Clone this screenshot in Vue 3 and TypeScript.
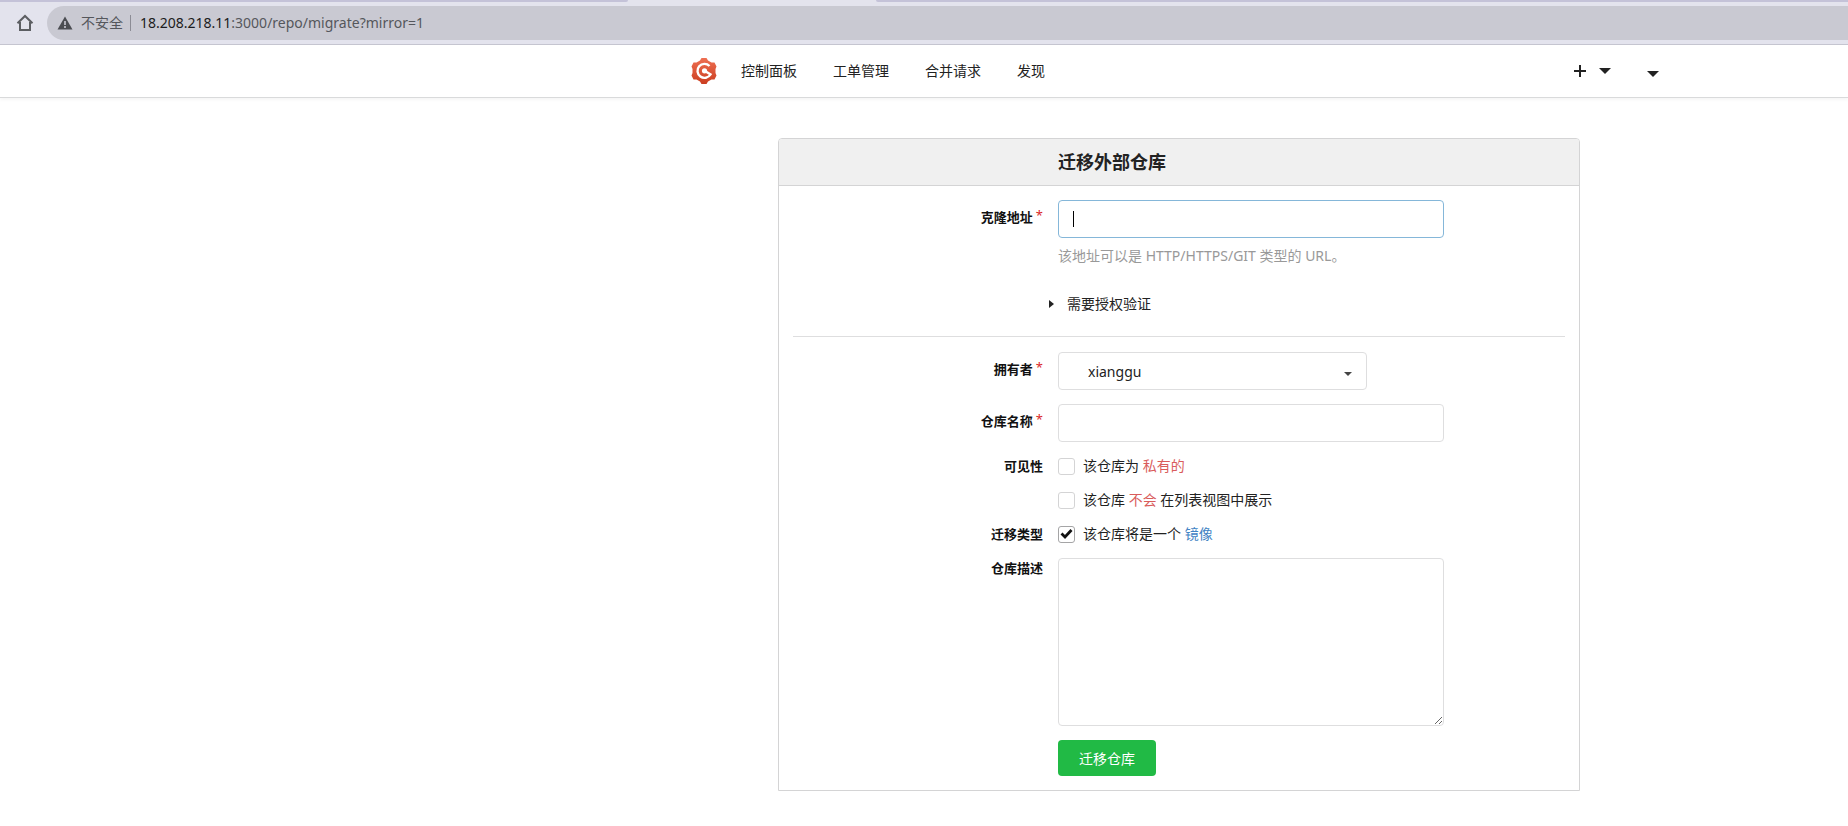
<script setup lang="ts">
import { onMounted, ref } from 'vue'

const navLinks = ['控制面板', '工单管理', '合并请求', '发现']
const cloneInput = ref<HTMLInputElement | null>(null)
const cloneAddr = ref('')
const owner = ref('xianggu')
const repoName = ref('')
const isPrivate = ref(false)
const isUnlisted = ref(false)
const isMirror = ref(true)
const description = ref('')

onMounted(() => cloneInput.value?.focus())
</script>

<template>
  <div class="page">
    <header class="browser">
      <div class="tabs"><span class="tab-left"></span><span class="tab-right"></span></div>
      <div class="toolbar">
        <button class="home" type="button" aria-label="主页">
          <svg width="18" height="18" viewBox="0 0 18 18" fill="none" stroke="#5c5e62" stroke-width="2">
            <path d="M1.500 9.200 9 2l7.500 7.200M4 8v8h10V8" />
          </svg>
        </button>
        <div class="omnibox">
          <svg class="warn" width="16" height="14" viewBox="0 0 16 14">
            <path d="M8 0.500 15.500 13.500H0.500Z" fill="#4b4d52" />
            <path d="M8 5v4M8 10v2" stroke="#c9c9d2" stroke-width="1.600" />
          </svg>
          <span class="unsafe">不安全</span>
          <span class="bar"></span>
          <span class="url"><b>18.208.218.11</b>:3000/repo/migrate?mirror=1</span>
        </div>
      </div>
    </header>

    <nav class="nav">
      <div class="nav-inner">
        <a class="logo" href="#" aria-label="首页">
          <svg width="26" height="26" viewBox="0 0 26 26">
            <defs>
              <linearGradient id="gear" x1="0" y1="0" x2="0" y2="1">
                <stop offset="0" stop-color="#ee6f52" />
                <stop offset="1" stop-color="#cb3e20" />
              </linearGradient>
            </defs>
            <path d="M10.500 0h5L17 2.500 20.500 4.500 23.500 4.500 25.500 8.500 24.500 11v4L25.500 17.500 23.500 21.500 20.500 21.500 17 23.500 15.500 26h-5L9 23.500 5.500 21.500 2.500 21.500 0.500 17.500 1.500 15v-4L0.500 8.500 2.500 4.500 5.500 4.500 9 2.500Z" fill="url(#gear)" />
            <path d="M18.500 8A7 7 0 1 0 19.500 16.500L14 13" fill="none" stroke="#fff" stroke-width="2.400" />
            <circle cx="13.500" cy="12.800" r="2.600" fill="#fff" />
          </svg>
        </a>
        <a v-for="link in navLinks" :key="link" href="#">{{ link }}</a>
        <div class="actions">
          <button class="create" type="button" aria-label="创建">
            <svg width="12" height="12" viewBox="0 0 12 12"><path d="M6 0v12M0 6h12" stroke="#222" stroke-width="2" /></svg>
            <svg width="12" height="6" viewBox="0 0 12 6"><path d="M0 0h12L6 6Z" fill="#222" /></svg>
          </button>
          <button class="user" type="button" aria-label="用户菜单">
            <svg width="12" height="6" viewBox="0 0 12 6"><path d="M0 0h12L6 6Z" fill="#222" /></svg>
          </button>
        </div>
      </div>
    </nav>

    <main class="content">
      <form class="panel" @submit.prevent>
        <h1>迁移外部仓库</h1>
        <div class="fields">
          <div class="row">
            <label class="name" for="clone">克隆地址<sup>*</sup></label>
            <div class="control">
              <input id="clone" ref="cloneInput" v-model="cloneAddr" class="box focused" :class="{ empty: !cloneAddr }" type="text" />
              <span v-if="!cloneAddr" class="caret"></span>
              <p class="help">该地址可以是 HTTP/HTTPS/GIT 类型的 URL。</p>
            </div>
          </div>
          <div class="row auth-row">
            <button class="auth" type="button">
              <svg width="5" height="8" viewBox="0 0 5 8"><path d="M0 0v8l5-4Z" fill="#222" /></svg>
              需要授权验证
            </button>
          </div>
          <hr />
          <div class="row">
            <label class="name" for="owner">拥有者<sup>*</sup></label>
            <div class="control select">
              <select id="owner" v-model="owner" class="box">
                <option value="xianggu">xianggu</option>
              </select>
              <svg width="8" height="4" viewBox="0 0 8 4"><path d="M0 0h8L4 4Z" fill="#444" /></svg>
            </div>
          </div>
          <div class="row">
            <label class="name" for="repo">仓库名称<sup>*</sup></label>
            <div class="control"><input id="repo" v-model="repoName" class="box" type="text" /></div>
          </div>
          <div class="row check-row">
            <span class="name">可见性</span>
            <label class="check"><input v-model="isPrivate" type="checkbox" /><span>该仓库为 <em class="red">私有的</em></span></label>
          </div>
          <div class="row check-row">
            <span class="name"></span>
            <label class="check"><input v-model="isUnlisted" type="checkbox" /><span>该仓库 <em class="red">不会</em> 在列表视图中展示</span></label>
          </div>
          <div class="row check-row">
            <span class="name">迁移类型</span>
            <label class="check">
              <input v-model="isMirror" type="checkbox" />
              <svg v-if="isMirror" class="tick" width="17" height="17" viewBox="0 0 17 17"><path d="m3.500 8.500 3.500 3.500 6.500-7" fill="none" stroke="#111" stroke-width="2.800" /></svg>
              <span>该仓库将是一个 <em class="blue">镜像</em></span>
            </label>
          </div>
          <div class="row check-row">
            <label class="name" for="desc">仓库描述</label>
            <div class="control"><textarea id="desc" v-model="description" class="box"></textarea></div>
          </div>
          <div class="row">
            <button class="submit" type="submit">迁移仓库</button>
          </div>
        </div>
      </form>
    </main>
  </div>
</template>

<style>
body { margin: 0; background: #fff; }
</style>

<style scoped>
.page,
button, input, select, textarea {
  font-family: "Noto Sans", "Noto Sans CJK SC", sans-serif;
  font-size: 14px;
  color: #222;
}
.page { line-height: 20px; }
* { box-sizing: border-box; }
svg { display: block; flex: none; }
button { border: 0; background: none; padding: 0; cursor: pointer; }

.browser { background: #e3e3ed; border-bottom: 1px solid #c5c5d0; }
.tabs { display: grid; grid-template-columns: 628fr 248px 972fr; height: 2px; }
.tab-left, .tab-right { background: #c4c2d8; }
.tab-left { border-bottom-right-radius: 2px; }
.tab-right { grid-column: 3; border-bottom-left-radius: 2px; }
.toolbar { display: flex; align-items: center; gap: 13px; padding: 4px 0 4px 16px; }
.omnibox {
  flex: 1;
  display: flex;
  align-items: center;
  height: 34px;
  padding-left: 10px;
  border-radius: 17px 0 0 17px;
  background: #c9c9d2;
  color: #55575c;
}
.unsafe { margin-left: 8px; }
.bar { width: 1px; height: 16px; margin: 0 9px 0 7px; background: #8c8c95; }
.url b { font-weight: 400; color: #1c1c20; }

.nav {
  display: grid;
  grid-template-columns: 678fr minmax(auto, 1002px) 168fr;
  border-bottom: 1px solid #d9dadb;
  box-shadow: 0 2px 3px rgba(0, 0, 0, 0.04);
}
.nav-inner { grid-column: 2; display: flex; align-items: center; gap: 36px; height: 52px; padding: 0 21px 0 13px; }
.nav a { color: #222; text-decoration: none; }
.nav .logo { margin-right: -12px; }
.actions { display: flex; align-items: center; gap: 36px; margin-left: auto; }
.create { display: flex; align-items: center; gap: 13px; }
.user { padding-top: 5px; }

.content { display: grid; grid-template-columns: 778fr minmax(auto, 802px) 268fr; padding: 40px 0 34px; }
.panel { grid-column: 2; border: 1px solid #d4d4d5; border-radius: 4px 4px 0 0; }
h1 {
  margin: 0;
  padding: 10px 14px 10px 279px;
  border-bottom: 1px solid #d4d4d5;
  border-radius: 3px 3px 0 0;
  background: #f0f0f0;
  font-size: 18px;
  line-height: 26px;
  font-weight: 700;
}
.fields { display: flex; flex-direction: column; gap: 14px; padding: 14px; }
.row { display: grid; grid-template-columns: 250px 1fr; column-gap: 15px; }
.row > :only-child { grid-column: 2; justify-self: start; }
.name { padding-top: 7px; text-align: right; font-size: 13px; font-weight: 700; color: #111; }
.check-row .name { padding-top: 0; }
sup { margin-left: 3px; font-size: 13px; line-height: 1; vertical-align: 2px; font-weight: 400; color: #db2828; }
.control { position: relative; width: 77%; max-width: 386px; }
.box {
  display: block;
  width: 100%;
  height: 38px;
  padding: 0 14px;
  border: 1px solid #dededf;
  border-radius: 4px;
  background: #fff;
  outline: 0;
}
.focused, .box:focus { border-color: #85b7d9; }
.empty { caret-color: transparent; }
.caret { position: absolute; left: 15px; top: 11px; width: 1px; height: 16px; background: #000; pointer-events: none; }
.help { margin: 8px 0 0; color: #999; }
.row > .auth { display: flex; align-items: center; gap: 13px; margin: 14px 0 8px -9px; line-height: 20px; }
hr { width: 100%; height: 1px; margin: 0 0 1px; border: 0; background: #dededf; }
.control.select { width: 61%; }
select.box { appearance: none; padding: 0 29px; }
.select svg { position: absolute; right: 15px; top: 20px; pointer-events: none; }
.check { position: relative; display: flex; align-items: center; gap: 8px; }
.check input { appearance: none; width: 17px; height: 17px; margin: 0; border: 1px solid #d4d4d5; border-radius: 3px; background: #fff; }
.check input:checked { border-color: #a5a5a6; }
.tick { position: absolute; left: 0; top: 1px; pointer-events: none; }
em { font-style: normal; }
.red { color: #d95c5c; }
.blue { color: #4183c4; }
textarea.box { height: 168px; padding: 10px 14px; resize: vertical; }
.submit { height: 36px; padding: 0 21px; border-radius: 4px; background: #21ba45; color: #fff; }
</style>
